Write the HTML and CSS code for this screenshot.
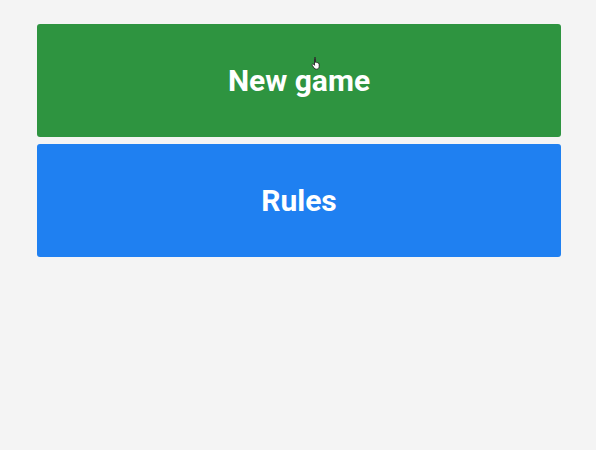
FILE: index.html
```html
<!DOCTYPE html>
<html>
<head>
<meta charset="utf-8">
<link rel="stylesheet" href="styles.css">
</head>
<body>
<div class="menu">
  <button class="btn btn-green">New game</button>
  <button class="btn btn-blue">Rules</button>
</div>
<svg class="cursor" width="12" height="13" viewBox="0 0 12 13">
  <path d="M3.5 0.8c.6 0 1 .4 1 1V5.4l.2-.1c.5-.3 1.1 0 1.2.4.5-.3 1.1 0 1.2.5.5-.2 1.1.1 1.1.6V9.4c0 1.6-1.2 2.8-2.8 2.8H5.2c-.9 0-1.6-.4-2.1-1.1L1.2 8.3c-.3-.5-.1-1 .4-1.2.4-.2.8 0 1.1.3l.8.9V1.8c0-.6.4-1 1-1z" fill="#fff" stroke="#222" stroke-width="0.9" stroke-linejoin="round"/>
</svg>
</body>
</html>
```
FILE: styles.css
```css
html, body {
  margin: 0;
  padding: 0;
  background: #f4f4f4;
  height: 100%;
}
body {
  position: relative;
  overflow: hidden;
}
.menu {
  display: flex;
  flex-direction: column;
  gap: 7px;
  padding: 24px 35px 0 37px;
}
.btn {
  display: flex;
  align-items: center;
  justify-content: center;
  height: 113px;
  border: none;
  border-radius: 3px;
  color: #fff;
  font-family: Roboto, "Liberation Sans", sans-serif;
  font-weight: 700;
  font-size: 30px;
  padding: 0;
  margin: 0;
  width: 100%;
}
.btn-green {
  background: #2e9440;
}
.btn-blue {
  background: #1f80f1;
}
.cursor {
  position: absolute;
  left: 311px;
  top: 57px;
}
```
